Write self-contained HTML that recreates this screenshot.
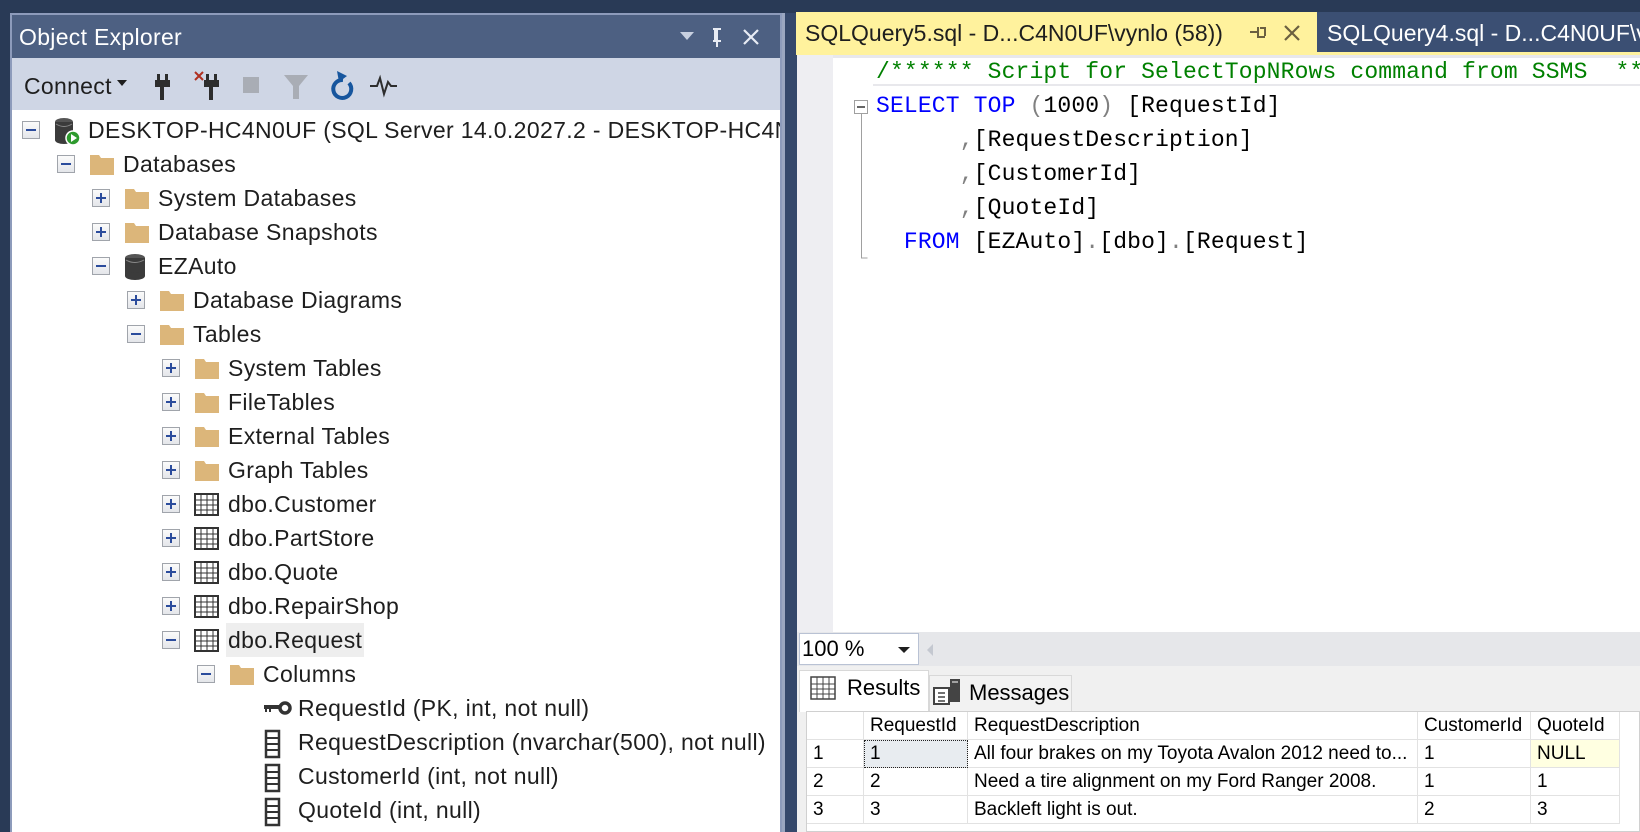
<!DOCTYPE html>
<html><head><meta charset="utf-8"><style>
*{margin:0;padding:0;box-sizing:border-box}
body{width:1640px;height:832px;overflow:hidden;background:#293a56;font-family:"Liberation Sans",sans-serif;position:relative}
.a{position:absolute}
.row{position:absolute;height:34px;white-space:nowrap;font-size:23px;letter-spacing:0.35px;color:#1e1e1e;line-height:34px;overflow:hidden}
.exp{position:absolute;width:18px;height:18px;border:1px solid #a0a4ab;background:linear-gradient(#fbfbfb,#e4e6ea);top:8px}
.exp:before{content:"";position:absolute;left:3px;top:7px;width:10px;height:2px;background:#2b4c9c}
.exp.p:after{content:"";position:absolute;left:7px;top:3px;width:2px;height:10px;background:#2b4c9c}
.ic{position:absolute;top:4px}
.code{font-family:"Liberation Mono",monospace;font-size:23px;letter-spacing:0.15px;position:absolute;white-space:pre;line-height:34px;color:#000}
.k{color:#0000ff}.g{color:#808080}.c{color:#008000}
.cell{position:absolute;height:28px;line-height:28px;font-size:19px;color:#000;padding-left:6px;white-space:nowrap;border-right:1px solid #e2e2e2;border-bottom:1px solid #e2e2e2;overflow:hidden}
</style></head><body>
<div class="a" style="left:10px;top:13px;width:772px;height:819px;background:#fff;border:2px solid #8d9bbb;border-bottom:none"></div>
<div class="a" style="left:12px;top:15px;width:768px;height:43px;background:#4d6082"></div>
<div class="a" style="left:19px;top:19px;font-size:23px;color:#fff;line-height:36px;letter-spacing:0.3px">Object Explorer</div>
<svg class="a" style="left:680px;top:28px" width="80" height="20"><path d="M0 4h14l-7 8z" fill="#c8d0e0"/><path d="M37 1v12M33 1h8M33 13h8M37 13v6M35 2v10" stroke="#e8ecf4" stroke-width="2" fill="none"/><path d="M64 2l14 14M78 2L64 16" stroke="#e8ecf4" stroke-width="2.2"/></svg>
<div class="a" style="left:12px;top:58px;width:768px;height:52px;background:#cfd6e5"></div>
<div class="a" style="left:24px;top:70px;font-size:23px;color:#1e1e1e;line-height:32px;letter-spacing:0.3px">Connect</div>
<svg class="a" style="left:117px;top:80px" width="12" height="8"><path d="M0 0h10l-5 6z" fill="#1e1e1e"/></svg>
<svg class="a" style="left:150px;top:68px" width="250" height="36">
<g fill="#2d2d2d"><rect x="7" y="6" width="3" height="7"/><rect x="15" y="6" width="3" height="7"/><rect x="5" y="12" width="15" height="7"/><rect x="10" y="18" width="4" height="14"/></g>
<g fill="#2d2d2d"><rect x="56" y="6" width="3" height="7"/><rect x="64" y="6" width="3" height="7"/><rect x="54" y="12" width="15" height="7"/><rect x="59" y="18" width="4" height="14"/></g>
<path d="M45 4l8 8M53 4l-8 8" stroke="#b03020" stroke-width="2"/>
<rect x="93" y="9" width="16" height="16" fill="#a9adb5"/>
<path d="M134 7h24l-9 11v13h-6v-13z" fill="#a9adb5"/>
<path d="M193 12a9 9 0 1 0 6 3" stroke="#17569e" stroke-width="4" fill="none"/><path d="M187 3l10 5-8 6z" fill="#17569e"/>
<path d="M220 18h7l3-8 4 16 4-12 3 4h6" stroke="#2d2d2d" stroke-width="2" fill="none"/>
</svg>
<div id="tree"></div>
<div class="a" style="left:782px;top:13px;width:15px;height:819px;background:#35486b"></div>
<div class="a" style="left:782px;top:13px;width:3px;height:819px;background:#9aa6c0"></div>
<div class="a" style="left:796px;top:12px;width:521px;height:41px;background:#fff29d"></div>
<div class="a" style="left:805px;top:14px;font-size:23px;color:#1e1e1e;line-height:38px;white-space:nowrap">SQLQuery5.sql - D...C4N0UF\vynlo (58))</div>
<svg class="a" style="left:1245px;top:22px" width="60" height="22"><path d="M5 10h8M13 5v10h7M15 6h5v8" stroke="#6b6040" stroke-width="2" fill="none"/><path d="M40 4l14 14M54 4L40 18" stroke="#6b6040" stroke-width="2.2"/></svg>
<div class="a" style="left:1317px;top:12px;width:323px;height:41px;background:#3b4f73"></div>
<div class="a" style="left:1327px;top:14px;font-size:23px;color:#fff;line-height:38px;white-space:nowrap">SQLQuery4.sql - D...C4N0UF\vynlo</div>
<div class="a" style="left:796px;top:52px;width:844px;height:3px;background:#fff29d"></div>
<div class="a" style="left:797px;top:55px;width:843px;height:577px;background:#fff"></div>
<div class="a" style="left:797px;top:55px;width:36px;height:577px;background:#eeeef2"></div>
<div class="a" style="left:833px;top:55px;width:807px;height:3px;background:#e8e8ec"></div>
<div class="a" style="left:873px;top:58px;width:767px;height:28px;background:#fff;border-bottom:2px solid #e8e8ec"></div>
<svg class="a" style="left:850px;top:96px" width="20" height="170"><rect x="4.5" y="4.5" width="13" height="13" fill="#fff" stroke="#a0a0a0"/><path d="M7 11h8" stroke="#333" stroke-width="1.5"/><path d="M11.5 18v144h6" stroke="#a0a0a0" fill="none"/></svg>
<div class="code" style="left:876px;top:55px"><span class="c">/****** Script for SelectTopNRows command from SSMS  ******/</span></div>
<div class="code" style="left:876px;top:89px"><span class="k">SELECT</span> <span class="k">TOP</span> <span class="g">(</span>1000<span class="g">)</span> [RequestId]
      <span class="g">,</span>[RequestDescription]
      <span class="g">,</span>[CustomerId]
      <span class="g">,</span>[QuoteId]
  <span class="k">FROM</span> [EZAuto]<span class="g">.</span>[dbo]<span class="g">.</span>[Request]</div>
<div class="a" style="left:797px;top:632px;width:843px;height:34px;background:#e6e7ea"></div>
<div class="a" style="left:799px;top:633px;width:120px;height:32px;background:#fff;border:1px solid #b9c2d4"></div>
<div class="a" style="left:802px;top:633px;font-size:22px;line-height:32px;color:#000">100 %</div>
<svg class="a" style="left:898px;top:644px" width="40" height="20"><path d="M0 3h12l-6 6z" fill="#1e1e1e"/><path d="M35 0v12l-6-6z" fill="#c4c8d0"/></svg>
<div class="a" style="left:797px;top:666px;width:843px;height:166px;background:#f0f0f0"></div>
<div class="a" style="left:799px;top:670px;width:130px;height:42px;background:#fff;border:1px solid #d8d8d8;border-bottom:none"></div>
<div class="a" style="left:929px;top:675px;width:143px;height:37px;background:#f2f2f2;border:1px solid #d8d8d8"></div>
<svg class="a" style="left:810px;top:676px" width="28" height="26"><rect x="1" y="1" width="24" height="22" fill="#fff" stroke="#444" stroke-width="1.5"/><path d="M1 8h24M1 13h24M1 18h24M7 1v22M13 1v22M19 1v22" stroke="#444"/></svg>
<div class="a" style="left:847px;top:673px;font-size:22px;line-height:30px;color:#000">Results</div>
<svg class="a" style="left:933px;top:678px" width="30" height="28"><rect x="1" y="10" width="15" height="16" fill="#fff" stroke="#444" stroke-width="2"/><path d="M5 15h7M5 19h7M5 23h7" stroke="#444" stroke-width="1.5"/><rect x="17" y="1" width="10" height="23" fill="#444"/><path d="M19 4h6" stroke="#fff"/></svg>
<div class="a" style="left:969px;top:678px;font-size:22px;line-height:30px;color:#000">Messages</div>
<div class="a" style="left:806px;top:711px;width:834px;height:121px;background:#fff;border:1px solid #d0d0d0"></div>
<div id="grid"></div>
<script>
var rows=[[0,'s','DESKTOP-HC4N0UF (SQL Server 14.0.2027.2 - DESKTOP-HC4N0UF\\vynlo)','m'],
[1,'f','Databases','m'],[2,'f','System Databases','p'],[2,'f','Database Snapshots','p'],[2,'d','EZAuto','m'],
[3,'f','Database Diagrams','p'],[3,'f','Tables','m'],[4,'f','System Tables','p'],[4,'f','FileTables','p'],
[4,'f','External Tables','p'],[4,'f','Graph Tables','p'],[4,'t','dbo.Customer','p'],[4,'t','dbo.PartStore','p'],
[4,'t','dbo.Quote','p'],[4,'t','dbo.RepairShop','p'],[4,'t','dbo.Request','m'],[5,'f','Columns','m'],
[6,'k','RequestId (PK, int, not null)',''],[6,'c','RequestDescription (nvarchar(500), not null)',''],
[6,'c','CustomerId (int, not null)',''],[6,'c','QuoteId (int, null)','']];
var ic={f:'<svg width="28" height="26"><path d="M2 4h9l2 3h13v17H2z" fill="#dcb67a"/></svg>',
s:'<svg width="28" height="28"><ellipse cx="11" cy="5" rx="9" ry="4" fill="#555"/><rect x="2" y="5" width="18" height="18" fill="#3b3b3b"/><ellipse cx="11" cy="23" rx="9" ry="4" fill="#3b3b3b"/><path d="M3 7q8 5 16 0" stroke="#888" fill="none"/><circle cx="20" cy="21" r="7" fill="#2e9a2e" stroke="#fff" stroke-width="1.5"/><path d="M18 17v8l6-4z" fill="#fff"/></svg>',
d:'<svg width="28" height="28"><ellipse cx="12" cy="5" rx="10" ry="4" fill="#555"/><rect x="2" y="5" width="20" height="18" fill="#3b3b3b"/><ellipse cx="12" cy="23" rx="10" ry="4" fill="#3b3b3b"/><path d="M3 7q9 5 18 0" stroke="#888" fill="none"/></svg>',
t:'<svg width="28" height="26"><rect x="2" y="3" width="23" height="21" fill="#fff" stroke="#333" stroke-width="2"/><path d="M2 9h23M2 14h23M2 19h23M8 3v21M14 3v21M20 3v21" stroke="#333"/></svg>',
c:'<svg width="28" height="30"><rect x="3" y="2" width="13" height="26" fill="#fff" stroke="#333" stroke-width="2.5"/><path d="M3 9h13M3 15h13M3 21h13" stroke="#333" stroke-width="2"/></svg>',
k:'<svg width="30" height="26"><circle cx="22" cy="13" r="5" fill="none" stroke="#333" stroke-width="3.5"/><path d="M1 12h16" stroke="#333" stroke-width="4"/><path d="M3 12v5M7 12v5" stroke="#333" stroke-width="2"/></svg>'};
var h='';
rows.forEach(function(r,i){var e=22+35*r[0],top=113+34*i;
h+='<div class="row" style="left:12px;top:'+top+'px;width:768px">';
e-=12;
if(r[3])h+='<div class="exp '+(r[3]=='p'?'p':'')+'" style="left:'+e+'px"></div>';
h+='<div class="ic" style="left:'+(e+31)+'px">'+ic[r[1]]+'</div>';
var bg=r[2]=='dbo.Request'?'background:#eeeeee;padding:0 2px;margin-left:-2px;':'';
h+='<div class="a" style="left:'+(e+66)+'px;top:0;'+bg+'">'+r[2]+'</div></div>';});
document.getElementById('tree').innerHTML=h;
var cols=[[807,57],[864,104],[968,450],[1418,113],[1531,89]];
var data=[['','RequestId','RequestDescription','CustomerId','QuoteId'],['1','1','All four brakes on my Toyota Avalon 2012 need to...','1','NULL'],['2','2','Need a tire alignment on my Ford Ranger 2008.','1','1'],['3','3','Backleft light is out.','2','3']];
var g='';
data.forEach(function(r,i){r.forEach(function(t,j){var st='';
if(i==1&&j==1)st='background:#e8ecf0;outline:1px dotted #222;outline-offset:-1px;';
if(i==1&&j==4)st='background:#ffffe1;';
g+='<div class="cell" style="left:'+cols[j][0]+'px;top:'+(712+28*i)+'px;width:'+cols[j][1]+'px;'+st+'">'+t+'</div>';});});
document.getElementById('grid').innerHTML=g;
</script>
</body></html>
